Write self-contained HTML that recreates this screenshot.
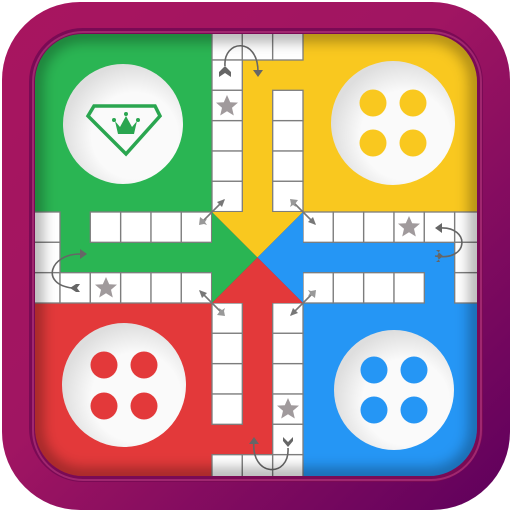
<!DOCTYPE html>
<html><head><meta charset="utf-8"><style>html,body{margin:0;padding:0;background:#fff}svg{display:block}</style></head><body>
<svg width="512" height="512" viewBox="0 0 512 512" xmlns="http://www.w3.org/2000/svg">
<defs>
<linearGradient id="fr" x1="0" y1="0" x2="1" y2="1">
<stop offset="0" stop-color="#a8155f"/><stop offset="0.45" stop-color="#a01562"/><stop offset="1" stop-color="#5e005c"/>
</linearGradient>
<clipPath id="bc"><rect x="35" y="34" width="442" height="442" rx="48"/></clipPath>
<radialGradient id="cg" cx="0.6" cy="0.6" r="0.6"><stop offset="0.6" stop-color="#fafafa"/><stop offset="1" stop-color="#dedede"/></radialGradient>
<filter id="bl" x="-0.2" y="-0.2" width="1.4" height="1.4"><feGaussianBlur stdDeviation="7"/></filter>
<g id="star"><polygon points="0,-11 3.2,-3.8 11,-3.4 5,1.8 6.8,9.5 0,5.3 -6.8,9.5 -5,1.8 -11,-3.4 -3.2,-3.8" fill="#a09a9c"/></g>
<g id="darr"><line x1="-12" y1="12" x2="12" y2="-12" stroke="#777" stroke-width="1.6"/><polygon points="13,-13 5,-10 10,-5" fill="#777"/><polygon points="-13,13 -12,5 -8,8 -5,7 -7,10 -5,13 -8,12" fill="#999"/></g>
</defs>
<rect x="2" y="2" width="508" height="508" rx="78" fill="url(#fr)"/>
<rect x="29" y="28" width="454" height="454" rx="54" fill="#7a0a55"/>
<rect x="33" y="32" width="448" height="448" rx="50" fill="none" stroke="#b93a80" stroke-width="2" opacity="0.6"/>
<g clip-path="url(#bc)">
<rect x="30" y="30" width="182" height="182" fill="#2ab553"/>
<rect x="303" y="30" width="182" height="182" fill="#f9c81f"/>
<rect x="30" y="303" width="182" height="182" fill="#e3393a"/>
<rect x="303" y="303" width="182" height="182" fill="#2596f5"/>
<rect x="30" y="212" width="182" height="91" fill="#2ab553"/>
<rect x="212" y="30" width="91" height="182" fill="#f9c81f"/>
<rect x="303" y="212" width="182" height="91" fill="#2596f5"/>
<rect x="212" y="303" width="91" height="182" fill="#e3393a"/>
<g fill="#fff" stroke="#7d7d7d" stroke-width="1.3">
<!-- top arm -->
<rect x="212" y="29.7" width="30.3" height="30.3"/><rect x="242.3" y="29.7" width="30.3" height="30.3"/><rect x="272.7" y="29.7" width="30.3" height="30.3"/>
<rect x="212" y="60" width="30.3" height="30.3"/><rect x="212" y="90.3" width="30.3" height="30.3"/><rect x="212" y="120.7" width="30.3" height="30.3"/><rect x="212" y="151" width="30.3" height="30.3"/><rect x="212" y="181.3" width="30.3" height="30.3"/>
<rect x="272.7" y="90.3" width="30.3" height="30.3"/><rect x="272.7" y="120.7" width="30.3" height="30.3"/><rect x="272.7" y="151" width="30.3" height="30.3"/><rect x="272.7" y="181.3" width="30.3" height="30.3"/>
<!-- bottom arm -->
<rect x="212" y="303" width="30.3" height="30.3"/><rect x="212" y="333.3" width="30.3" height="30.3"/><rect x="212" y="363.7" width="30.3" height="30.3"/><rect x="212" y="394" width="30.3" height="30.3"/><rect x="212" y="454.7" width="30.3" height="30.3"/>
<rect x="242.3" y="454.7" width="30.3" height="30.3"/>
<rect x="272.7" y="303" width="30.3" height="30.3"/><rect x="272.7" y="333.3" width="30.3" height="30.3"/><rect x="272.7" y="363.7" width="30.3" height="30.3"/><rect x="272.7" y="394" width="30.3" height="30.3"/><rect x="272.7" y="424.3" width="30.3" height="30.3"/><rect x="272.7" y="454.7" width="30.3" height="30.3"/>
<!-- left arm -->
<rect x="29.7" y="212" width="30.3" height="30.3"/><rect x="90.3" y="212" width="30.3" height="30.3"/><rect x="120.7" y="212" width="30.3" height="30.3"/><rect x="151" y="212" width="30.3" height="30.3"/><rect x="181.3" y="212" width="30.3" height="30.3"/>
<rect x="29.7" y="242.3" width="30.3" height="30.3"/>
<rect x="29.7" y="272.7" width="30.3" height="30.3"/><rect x="60" y="272.7" width="30.3" height="30.3"/><rect x="90.3" y="272.7" width="30.3" height="30.3"/><rect x="120.7" y="272.7" width="30.3" height="30.3"/><rect x="151" y="272.7" width="30.3" height="30.3"/><rect x="181.3" y="272.7" width="30.3" height="30.3"/>
<!-- right arm -->
<rect x="303" y="212" width="30.3" height="30.3"/><rect x="333.3" y="212" width="30.3" height="30.3"/><rect x="363.7" y="212" width="30.3" height="30.3"/><rect x="394" y="212" width="30.3" height="30.3"/><rect x="424.3" y="212" width="30.3" height="30.3"/><rect x="454.7" y="212" width="30.3" height="30.3"/>
<rect x="454.7" y="242.3" width="30.3" height="30.3"/>
<rect x="303" y="272.7" width="30.3" height="30.3"/><rect x="333.3" y="272.7" width="30.3" height="30.3"/><rect x="363.7" y="272.7" width="30.3" height="30.3"/><rect x="394" y="272.7" width="30.3" height="30.3"/><rect x="454.7" y="272.7" width="30.3" height="30.3"/>
</g>
<!-- center -->
<polygon points="212,212 257.5,257.5 212,303" fill="#2ab553"/>
<polygon points="212,212 303,212 257.5,257.5" fill="#f9c81f"/>
<polygon points="303,212 303,303 257.5,257.5" fill="#2596f5"/>
<polygon points="212,303 303,303 257.5,257.5" fill="#e3393a"/>
<!-- stars -->
<use href="#star" x="227" y="106"/><use href="#star" x="106" y="288"/><use href="#star" x="409" y="227"/><use href="#star" x="288" y="409"/>
<!-- diagonal arrows -->
<use href="#darr" x="212" y="212"/>
<g transform="translate(303,212) rotate(90)"><use href="#darr"/></g>
<g transform="translate(303,303) rotate(180)"><use href="#darr"/></g>
<g transform="translate(212,303) rotate(270)"><use href="#darr"/></g>
<!-- curved arrows -->
<g fill="none" stroke="#666" stroke-width="1.6">
<path d="M225,66 C223,40 258,36 258,72"/>
<path d="M80,254 C50,254 40,284 72,288"/>
<path d="M435,256 C470,262 470,226 440,228"/>
<path d="M288,448 C290,478 250,478 254,440"/>
</g>
<g fill="#666">
<polygon points="253,70 263,70 258,77"/><polygon points="219,72 225,66 231,72 231,77 225,73 219,77"/>
<polygon points="80,249 80,259 87,254"/><polygon points="76,284 70,288 76,292 80,292 77,288 80,284"/>
<polygon points="442,223 442,233 435,228"/><polygon points="436,250 443,256 436,262 440,262 437,256 440,250"/>
<polygon points="249,444 259,444 254,437"/><polygon points="283,441 288,447 293,441 293,437 288,442 283,437"/>
</g>
<!-- home circles -->
<circle cx="123" cy="124" r="60" fill="url(#cg)"/>
<circle cx="393" cy="123" r="62" fill="url(#cg)"/>
<circle cx="124" cy="385" r="62" fill="url(#cg)"/>
<circle cx="394" cy="390" r="60" fill="url(#cg)"/>
<g fill="#f9c81f"><circle cx="373" cy="103" r="13.5"/><circle cx="413" cy="103" r="13.5"/><circle cx="373" cy="143" r="13.5"/><circle cx="413" cy="143" r="13.5"/></g>
<g fill="#e3393a"><circle cx="104" cy="365" r="13.5"/><circle cx="144" cy="365" r="13.5"/><circle cx="104" cy="406" r="13.5"/><circle cx="144" cy="406" r="13.5"/></g>
<g fill="#2596f5"><circle cx="374" cy="370" r="13.5"/><circle cx="414" cy="370" r="13.5"/><circle cx="374" cy="410" r="13.5"/><circle cx="414" cy="410" r="13.5"/></g>
<polygon points="94,106 155,106 160,116 126,154 88,116" fill="none" stroke="#2aa650" stroke-width="3.5" stroke-linejoin="miter"/>
<path d="M115,121 L120,127 L126,116 L132,127 L137,121 L134,134 L118,134 Z" fill="#2aa650"/>
<circle cx="114" cy="120" r="2" fill="#2aa650"/><circle cx="126" cy="114" r="2" fill="#2aa650"/><circle cx="138" cy="120" r="2" fill="#2aa650"/>
<!-- inner shadow -->
<rect x="35" y="34" width="442" height="442" rx="48" fill="none" stroke="#000" stroke-opacity="0.35" stroke-width="14" filter="url(#bl)"/>
</g>
</svg>
</body></html>
